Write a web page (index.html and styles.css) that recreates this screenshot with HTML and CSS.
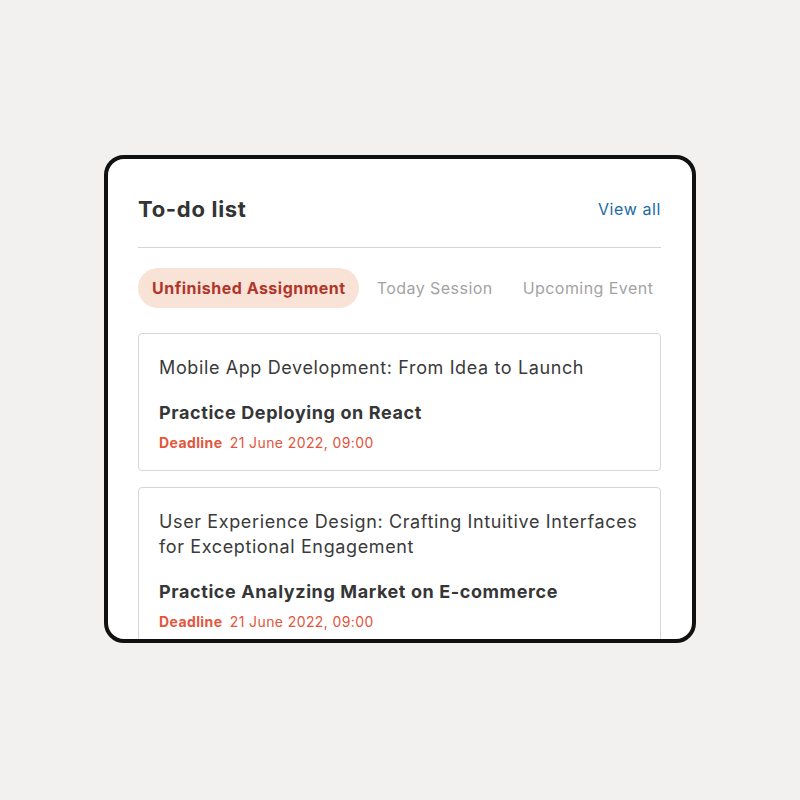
FILE: index.html
```html
<!DOCTYPE html>
<html lang="en">
<head>
<meta charset="utf-8">
<title>To-do list</title>
<link rel="stylesheet" href="styles.css">
</head>
<body>
<main class="stage">
  <section class="todo">
    <header class="todo-head">
      <h2 class="todo-title">To-do list</h2>
      <a class="view-all" href="#">View all</a>
    </header>
    <nav class="tabs">
      <span class="tab tab-active">Unfinished Assignment</span>
      <span class="tab">Today Session</span>
      <span class="tab">Upcoming Event</span>
    </nav>
    <div class="items">
      <article class="item">
        <p class="item-course">Mobile App Development: From Idea to Launch</p>
        <h3 class="item-task">Practice Deploying on React</h3>
        <p class="item-deadline"><strong>Deadline</strong> 21 June 2022, 09:00</p>
      </article>
      <article class="item">
        <p class="item-course">User Experience Design: Crafting Intuitive Interfaces for Exceptional Engagement</p>
        <h3 class="item-task">Practice Analyzing Market on E-commerce</h3>
        <p class="item-deadline"><strong>Deadline</strong> 21 June 2022, 09:00</p>
      </article>
    </div>
  </section>
</main>
</body>
</html>
```

FILE: styles.css
```css
* { box-sizing: border-box; }
html, body { margin: 0; padding: 0; }
body {
  background: #f2f1ef;
  font-family: Inter, "Noto Sans", sans-serif;
  color: #333;
}
.stage {
  width: 800px;
  height: 800px;
  display: flex;
  justify-content: center;
  padding-top: 155px;
}
.todo {
  width: 592px;
  height: 488px;
  background: #fff;
  border: 4px solid #111;
  border-radius: 20px;
  overflow: hidden;
  padding: 30px 31px 0 30px;
}
.todo-head {
  display: flex;
  justify-content: space-between;
  align-items: center;
  height: 40px;
  box-sizing: content-box;
  padding-bottom: 18px;
  border-bottom: 1px solid #d4d4d4;
}
.todo-title {
  margin: 0;
  font-size: 22px;
  font-weight: 700;
  color: #333;
  letter-spacing: 0.7px;
}
.view-all {
  font-size: 16px;
  color: #1a69a6;
  text-decoration: none;
  letter-spacing: 0.6px;
}
.tabs {
  display: flex;
  gap: 6px;
  margin-top: 20px;
}
.tab {
  flex-shrink: 0;
  white-space: nowrap;
  height: 40px;
  display: flex;
  align-items: center;
  padding: 0 12px;
  border-radius: 20px;
  font-size: 16px;
  color: #a3a3a3;
  letter-spacing: 0.45px;
}
.tab-active {
  background: #f9e3d6;
  color: #b0362b;
  font-weight: 700;
  letter-spacing: 0.5px;
  padding: 0 13px 0 14px;
}
.items {
  display: flex;
  flex-direction: column;
  gap: 16px;
  margin-top: 25px;
}
.item {
  border: 1px solid #d6d6d6;
  border-radius: 4px;
  padding: 21px 20px 17px 20px;
}
.item-course {
  margin: 0;
  font-size: 18px;
  line-height: 25px;
  color: #3a3a3a;
  letter-spacing: 0.62px;
}
.item-task {
  margin: 21px 0 0 0;
  font-size: 18px;
  line-height: 24px;
  font-weight: 700;
  color: #363636;
  letter-spacing: 0.6px;
}
.item-deadline {
  margin: 8px 0 0 0;
  font-size: 14px;
  line-height: 20px;
  color: #e4553c;
  letter-spacing: 0.4px;
}
.item-deadline strong {
  font-weight: 700;
  margin-right: 3px;
}
```
